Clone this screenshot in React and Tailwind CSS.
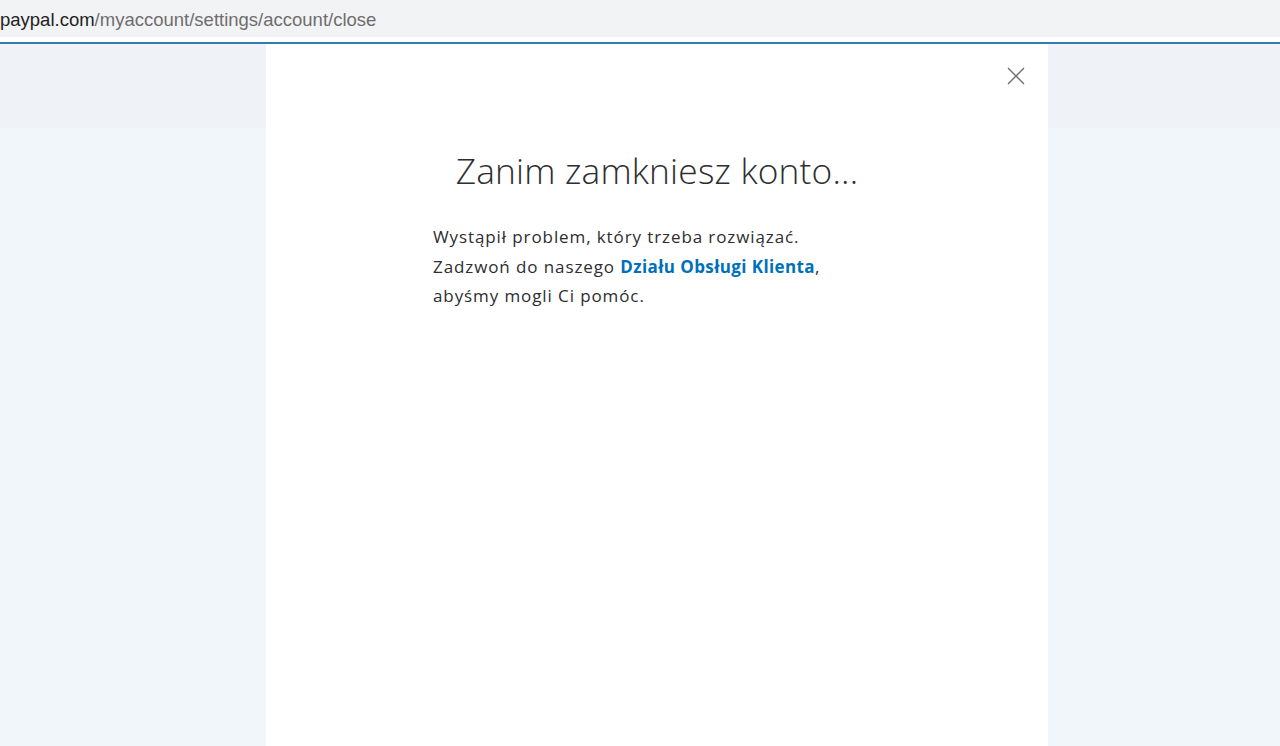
import React from 'react';

const CloseIcon = () => (
  <svg width="20" height="20" viewBox="0 0 20 20" fill="none" stroke="#6b6b6b" strokeWidth="1.3">
    <path d="M2 2 L18 18 M18 2 L2 18" />
  </svg>
);

const App = () => {
  return (
    <div className="w-full h-[746px] flex flex-col overflow-hidden bg-[#f1f6fa]" style={{ fontFamily: '"Open Sans", "Noto Sans", sans-serif' }}>
      {/* address bar */}
      <div className="h-[37px] bg-[#f2f3f5] flex items-center pt-[3px]">
        <span className="text-[18.5px] text-[#222] leading-none" style={{ fontFamily: '"Liberation Sans", Arial, sans-serif' }}>
          paypal.com<span className="text-[#6e6e6e]">/myaccount/settings/account/close</span>
        </span>
      </div>
      <div className="h-[5px] bg-white" />
      <div className="h-[2px] bg-[#2f7db3]" />

      <div className="relative flex-1 flex">
        <div className="absolute inset-x-0 top-0 h-[84px] bg-[#eff2f7]" />
        <div className="relative ml-[266px] w-[782px] bg-white flex flex-col">
          <div className="flex justify-end pt-[22px] pr-[22px]">
            <button className="w-5 h-5 flex items-center justify-center">
              <CloseIcon />
            </button>
          </div>
          <h1 className="mt-[67px] text-center text-[35.3px] font-light text-[#2c2e2f] leading-none tracking-[0.2px]">
            Zanim zamkniesz konto...
          </h1>
          <div className="mt-[34px] pl-[167px] text-[17px] leading-[29.5px] text-[#2c2e2f] tracking-[0.9px]">
            <p>Wystąpił problem, który trzeba rozwiązać.</p>
            <p>
              Zadzwoń do naszego <a className="font-bold text-[#0070ba] tracking-[0.4px]">Działu Obsługi Klienta</a>,
            </p>
            <p>abyśmy mogli Ci pomóc.</p>
          </div>
        </div>
      </div>
    </div>
  );
};

export default App;
